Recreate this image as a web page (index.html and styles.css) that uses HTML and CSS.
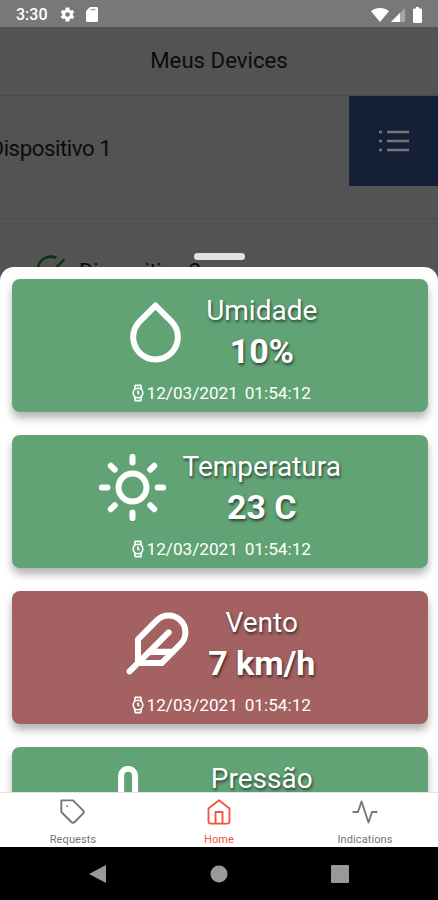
FILE: index.html
```html
<!DOCTYPE html>
<html lang="pt-BR">
<head>
<meta charset="UTF-8">
<meta name="viewport" content="width=device-width, initial-scale=1.0">
<title>Meus Devices</title>
<link rel="stylesheet" href="styles.css">
</head>
<body>

<!-- shared watch icon -->
<svg class="defs" width="0" height="0">
    <symbol id="watch" viewBox="0 0 12 18">
        <circle cx="6" cy="9" r="4.8"/>
        <path d="M2.500 5.500l.8-4.100h5.400l.8 4.100M2.500 12.500l.8 4.100h5.400l.8-4.100M6 6.600V9l1.400 1"/>
    </symbol>
</svg>

<div class="screen">
    <div class="status-bar">
        <span class="clock">3:30</span>
        <svg class="gear" viewBox="0 0 24 24"><path fill-rule="evenodd" d="M19.4 13a7.500 7.500 0 0 0 0-2l2.200-1.700-2.200-3.800-2.600 1a7.500 7.500 0 0 0-1.700-1L14.700 2H9.300l-.4 3.500a7.500 7.500 0 0 0-1.700 1l-2.600-1-2.200 3.800L4.600 11a7.500 7.500 0 0 0 0 2l-2.200 1.700 2.200 3.800 2.600-1a7.500 7.500 0 0 0 1.700 1l.4 3.500h5.400l.4-3.500a7.500 7.500 0 0 0 1.700-1l2.600 1 2.200-3.800zM12 15.300a3.300 3.300 0 1 1 0-6.600 3.300 3.300 0 0 1 0 6.600z"/></svg>
        <svg class="sd" viewBox="0 0 12 15"><path d="M4 0h6.500A1.500 1.500 0 0 1 12 1.500v12a1.500 1.500 0 0 1-1.500 1.500h-9A1.500 1.500 0 0 1 0 13.500V4z"/><path class="pins" d="M4.500 2.600h5"/></svg>
        <span class="space"></span>
        <svg class="wifi" viewBox="0 0 18 14"><path d="M0 3.200C5-1 13-1 18 3.200L9 14z"/></svg>
        <svg class="signal" viewBox="0 0 14 14"><path class="dim" d="M14 0v14H0z"/><path d="M9 5v9H0z"/></svg>
        <svg class="battery" viewBox="0 0 9 16"><path d="M3 0h3v1.500h1.800A1.200 1.200 0 0 1 9 2.700v12.100A1.200 1.200 0 0 1 7.800 16H1.200A1.200 1.200 0 0 1 0 14.800V2.700a1.200 1.200 0 0 1 1.200-1.200H3z"/></svg>
    </div>

    <div class="main">
        <div class="header">Meus Devices</div>
        <div class="device swiped">
            <span class="device-name">Dispositivo 1</span>
            <div class="device-action">
                <svg viewBox="0 0 30 22"><path d="M8 2h22M8 11h22M8 20h22M0 2h3M0 11h3M0 20h3"/></svg>
            </div>
        </div>
        <div class="device">
            <svg class="check" viewBox="0 0 24 24"><path d="M22 11.080V12a10 10 0 1 1-5.930-9.140"/><path d="M22 4L12 14.010l-3-3"/></svg>
            <span class="device-name">Dispositivo 2</span>
        </div>

        <div class="sheet-wrap">
            <div class="handle"></div>
            <div class="sheet">
                <div class="card">
                    <div class="card-body">
                        <svg class="icon" viewBox="0 0 24 24"><path d="M12 2.690l5.660 5.660a8 8 0 1 1-11.310 0z"/></svg>
                        <div class="reading">
                            <div class="label">Umidade</div>
                            <div class="value">10%</div>
                        </div>
                    </div>
                    <div class="date"><svg><use href="#watch"/></svg>12/03/2021 01:54:12</div>
                </div>
                <div class="card">
                    <div class="card-body">
                        <svg class="icon" viewBox="0 0 24 24"><circle cx="12" cy="12" r="5"/><path d="M12 1v2M12 21v2M4.220 4.220l1.420 1.420M18.360 18.360l1.420 1.420M1 12h2M21 12h2M4.220 19.780l1.420-1.420M18.360 5.640l1.420-1.420"/></svg>
                        <div class="reading">
                            <div class="label">Temperatura</div>
                            <div class="value">23 C</div>
                        </div>
                    </div>
                    <div class="date"><svg><use href="#watch"/></svg>12/03/2021 01:54:12</div>
                </div>
                <div class="card alert">
                    <div class="card-body">
                        <svg class="icon" viewBox="0 0 24 24"><path d="M20.240 12.240a6 6 0 0 0-8.490-8.490L5 10.500V19h8.500zM16 8L2 22M17.500 15H9"/></svg>
                        <div class="reading">
                            <div class="label">Vento</div>
                            <div class="value">7 km/h</div>
                        </div>
                    </div>
                    <div class="date"><svg><use href="#watch"/></svg>12/03/2021 01:54:12</div>
                </div>
                <div class="card">
                    <div class="card-body">
                        <svg class="icon" viewBox="0 0 24 24"><path d="M14 14.760V3.500a2.500 2.500 0 0 0-5 0v11.260a4.500 4.500 0 1 0 5 0z"/></svg>
                        <div class="reading wide">
                            <div class="label">Pressão</div>
                        </div>
                    </div>
                </div>
            </div>
        </div>
    </div>

    <div class="tabs">
        <div class="tab">
            <svg viewBox="0 0 24 24"><path d="M20.590 13.410l-7.170 7.170a2 2 0 0 1-2.830 0L2 12V2h10l8.590 8.590a2 2 0 0 1 0 2.820zM7 7h.01"/></svg>
            <span>Requests</span>
        </div>
        <div class="tab active">
            <svg viewBox="0 0 24 24"><path d="M3 9l9-7 9 7v11a2 2 0 0 1-2 2H5a2 2 0 0 1-2-2zM9 22V12h6v10"/></svg>
            <span>Home</span>
        </div>
        <div class="tab">
            <svg viewBox="0 0 24 24"><path d="M22 12h-4l-3 9L9 3l-3 9H2"/></svg>
            <span>Indications</span>
        </div>
    </div>

    <div class="nav-bar">
        <svg viewBox="0 0 18 18"><path d="M17 0v18L0 9z"/></svg>
        <svg viewBox="0 0 18 18"><circle cx="9" cy="9" r="8.500"/></svg>
        <svg viewBox="0 0 18 18"><rect width="18" height="18" rx="1"/></svg>
    </div>
</div>

</body>
</html>
```

FILE: styles.css
```css
body {
    margin: 0;
    font-family: Roboto, sans-serif;
}
svg {
    display: block;
    flex: none;
}
.defs {
    position: absolute;
}
.screen {
    display: flex;
    flex-direction: column;
    width: 438px;
    height: 900px;
    overflow: hidden;
}

/* status bar */
.status-bar {
    display: flex;
    align-items: center;
    box-sizing: border-box;
    height: 27px;
    padding: 2px 16px 0 16px;
    background-color: #787878;
    color: #fff;
    fill: #fff;
}
.clock {
    font-size: 16px;
    font-weight: 500;
    width: 31px;
}
.gear {
    width: 17px;
    height: 17px;
    margin-left: 12px;
}
.sd {
    width: 12px;
    height: 15px;
    margin-left: 10px;
}
.sd .pins {
    stroke: #aaa;
    stroke-width: 1.5;
}
.space {
    flex: 1;
}
.wifi {
    width: 18px;
    height: 14px;
}
.signal {
    width: 14px;
    height: 14px;
    margin-left: 2px;
}
.signal .dim {
    fill: #a5a5a5;
}
.battery {
    width: 9px;
    height: 16px;
    margin-left: 8px;
}

/* dimmed page */
.main {
    position: relative;
    flex: 1;
    overflow: hidden;
    background-color: #535353;
    color: #0c0c0c;
}
.header {
    box-sizing: border-box;
    height: 69px;
    border-bottom: 1px solid #4a4a4a;
    font-size: 22.200px;
    line-height: 66px;
    text-align: center;
}
.device {
    display: flex;
    box-sizing: border-box;
    height: 123px;
    border-bottom: 1px solid #4a4a4a;
    padding-left: 35px;
}
.device-name {
    font-size: 22.200px;
    letter-spacing: -0.420px;
    line-height: 104px;
}
.swiped {
    justify-content: space-between;
    padding-left: 0;
}
.swiped .device-name {
    margin-left: -10.500px;
}
.device-action {
    display: flex;
    align-items: center;
    justify-content: center;
    width: 89px;
    height: 90px;
    background-color: #151f35;
}
.device-action svg {
    width: 30px;
    height: 22px;
    stroke: #77757c;
    stroke-width: 2.500;
}
.check {
    width: 32px;
    height: 32px;
    margin: 35px 12px 0 0;
    fill: none;
    stroke: #0b3513;
    stroke-width: 2;
}

/* bottom sheet, over the page */
.sheet-wrap {
    position: absolute;
    top: 226px;
    left: 0;
    right: 0;
    bottom: 0;
}
.handle {
    width: 51px;
    height: 7px;
    margin: 0 auto 7px;
    border-radius: 4px;
    background-color: #e2e2e2;
}
.sheet {
    display: flex;
    flex-direction: column;
    gap: 22.500px;
    height: 600px;
    padding: 11.500px 10.500px 0 12px;
    border-radius: 14px 14px 0 0;
    background-color: #fff;
}
.card {
    flex: none;
    box-sizing: border-box;
    height: 133.500px;
    padding-top: 14px;
    border-radius: 8px;
    background-color: #61a375;
    box-shadow: 0 6px 9px rgba(0, 0, 0, 0.3);
    color: #fff;
}
.alert {
    background-color: #a36161;
}
.card-body {
    display: flex;
    justify-content: center;
    gap: 17px;
    height: 85px;
}
.icon {
    width: 67px;
    height: 67px;
    margin-top: 5px;
    fill: none;
    stroke: #fff;
    stroke-width: 2.150;
    stroke-linecap: round;
    stroke-linejoin: round;
}
.reading {
    text-align: center;
    text-shadow: 1px 2px 3px rgba(0, 0, 0, 0.6);
}
.wide {
    width: 164px;
}
.label {
    font-size: 28px;
    line-height: 36px;
}
.value {
    font-size: 34px;
    font-weight: 700;
    line-height: 44px;
}
.date {
    display: flex;
    align-items: center;
    justify-content: center;
    gap: 2px;
    padding-left: 4px;
    font-size: 17.200px;
    line-height: 30px;
    word-spacing: 2.500px;
}
.date svg {
    width: 12px;
    height: 18px;
    fill: none;
    stroke: #fff;
    stroke-width: 1.600;
}

/* tabs */
.tabs {
    display: grid;
    grid-template-columns: repeat(3, 1fr);
    box-sizing: border-box;
    height: 55px;
    border-top: 1px solid #e4e4e4;
    background-color: #fff;
}
.tab {
    display: flex;
    flex-direction: column;
    align-items: center;
    padding-top: 5px;
    color: #757575;
    font-size: 11px;
}
.tab svg {
    width: 28px;
    height: 28px;
    margin-bottom: 7px;
    fill: none;
    stroke: currentColor;
    stroke-width: 1.600;
    stroke-linejoin: round;
    stroke-linecap: round;
}
.tab span {
    line-height: 13px;
    letter-spacing: 0.100px;
}
.active {
    color: #f4543a;
}

/* android buttons */
.nav-bar {
    display: flex;
    align-items: center;
    justify-content: space-between;
    box-sizing: border-box;
    height: 53px;
    padding: 0 89px;
    background-color: #000;
    fill: #999;
}
.nav-bar svg {
    width: 18px;
    height: 18px;
}
```
